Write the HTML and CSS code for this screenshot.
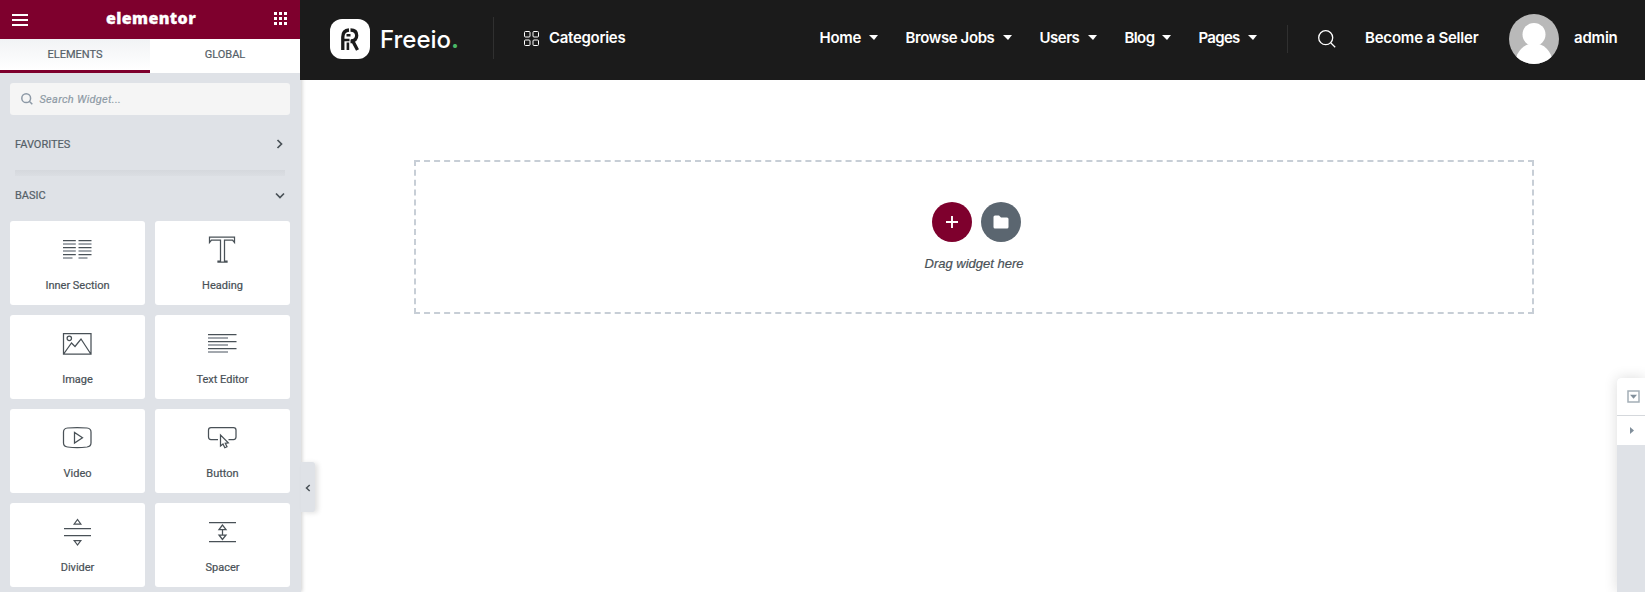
FILE: index.html
```html
<!DOCTYPE html>
<html lang="en">
<head>
<meta charset="utf-8">
<title>Elementor</title>
<link rel="stylesheet" href="styles.css">
</head>
<body>
<div class="app">
  <aside class="panel">
    <header class="panel-head">
      <svg class="burger" width="16" height="12" viewBox="0 0 16 12"><path d="M0 1h16M0 6h16M0 11h16" stroke="#fff" stroke-width="2"/></svg>
      <span class="brand">elementor</span>
      <svg width="13" height="13" viewBox="0 0 13 13" fill="#fff"><path d="M0 0h3v3H0zM5 0h3v3H5zM10 0h3v3h-3zM0 5h3v3H0zM5 5h3v3H5zM10 5h3v3h-3zM0 10h3v3H0zM5 10h3v3H5zM10 10h3v3h-3z"/></svg>
    </header>
    <nav class="tabs"><span class="tab active">ELEMENTS</span><span class="tab">GLOBAL</span></nav>
    <div class="search">
      <svg width="12" height="12" viewBox="0 0 12 12" fill="none" stroke="#8d99a6" stroke-width="1.5"><circle cx="5.2" cy="5.2" r="4.4"/><path d="M8.3 8.3l3 3"/></svg>
      <span>Search Widget...</span>
    </div>
    <div class="cat favorites"><span>FAVORITES</span><svg width="10" height="10" viewBox="0 0 10 10" fill="none" stroke="#495157" stroke-width="1.7"><path d="M2.500 1l4 4-4 4"/></svg></div>
    <div class="rule"></div>
    <div class="cat basic"><span>BASIC</span><svg width="10" height="10" viewBox="0 0 10 10" fill="none" stroke="#495157" stroke-width="1.7"><path d="M1 2.500l4 4 4-4"/></svg></div>
    <div class="grid">
      <div class="card"><svg class="ico" viewBox="0 0 30 30"><path d="M1 5.500h12.800M16.500 5.500h13M1 12.500h12.800M16.500 12.500h13M1 19.500h12.800M16.500 19.500h13"/><path class="soft" d="M1 9h12.800M16.500 9h13M1 16h12.800M16.500 16h13M1 23h9.500M16.500 23H25.500"/></svg><span>Inner Section</span></div>
      <div class="card"><svg class="ico" viewBox="0 0 30 30"><path d="M2.500 2h25v5.500l-2-2.500h-8v21h2.500v1h-9v-1h2.500V5h-9l-2 2.500z"/></svg><span>Heading</span></div>
      <div class="card"><svg class="ico" viewBox="0 0 30 30"><path d="M1.500 4.500h27.500v20.500h-27.500zM2 24.500L9.500 14l3.500 3.500 6-7.500 9.500 14.500"/><circle cx="7.300" cy="9.300" r="2.200"/></svg><span>Image</span></div>
      <div class="card"><svg class="ico" viewBox="0 0 30 30"><path d="M1 5.500h28.500M1 12.500h28.500M1 19.500h28.500"/><path class="soft" d="M1 9h20M1 16h20M1 23h20"/></svg><span>Text Editor</span></div>
      <div class="card"><svg class="ico" viewBox="0 0 30 30"><path d="M5.500 5Q15 4 25 5q4 .5 4 4v11q0 3.500-4 4Q15 25 5.500 24q-4-.5-4-4V9q0-3.500 4-4zM12.500 9.500v10.500l8-5.300z"/></svg><span>Video</span></div>
      <div class="card"><svg class="ico" viewBox="0 0 30 30"><path d="M11 16.500H4q-2.500 0-2.500-2.500V7q0-2.500 2.500-2.500h22.500q2.500 0 2.500 2.500v7q0 2.500-2.500 2.500h-5M13.500 12v11l2.500-2 1.800 3.700 2.200-1-1.700-3.400 3-.5z"/></svg><span>Button</span></div>
      <div class="card"><svg class="ico" viewBox="0 0 30 30"><path d="M2 11.500h27M2 18.500h27M15.500 2.500l-3.300 4.500h6.600zM15.500 28l-3.300-4.500h6.600z"/></svg><span>Divider</span></div>
      <div class="card"><svg class="ico" viewBox="0 0 30 30"><path d="M2 5.500h27M2 24.500h27M15.500 8L12 12.500h7zM15.500 22.500L12 18h7zM15.500 12.500V18"/></svg><span>Spacer</span></div>
    </div>
    <div class="collapse"><svg width="6" height="8" viewBox="0 0 6 8" fill="none" stroke="#495157" stroke-width="1.500"><path d="M4.700 1L1.500 4l3.200 3"/></svg></div>
  </aside>
  <main class="preview">
    <header class="site-head">
      <svg class="logo" width="40" height="40" viewBox="0 0 40 40"><rect width="40" height="40" rx="12" fill="#fff"/><g fill="none" stroke="#1b1b1b"><path stroke-width="3.300" d="M12.800 31V18q0-6.500 6.200-7M20.500 11q6.200 0 6.200 5.500 0 5-5.700 5.500M20.500 22.500h2.500l4.500 8.500"/><path stroke-width="2.600" d="M17.900 31v-7.500M14 21h5.500M16.500 16.300h4"/></g></svg>
      <span class="name">Freeio<b>.</b></span>
      <i class="sep tall"></i>
      <svg class="cats" width="15" height="15" viewBox="0 0 15 15" fill="none" stroke="#fff"><rect x=".5" y=".5" width="5.500" height="5.500" rx="1"/><rect x="9" y=".5" width="5.500" height="5.500" rx="1"/><rect x=".5" y="9" width="5.500" height="5.500" rx="1"/><rect x="9" y="9" width="5.500" height="5.500" rx="1"/></svg>
      <span class="link categories">Categories</span>
      <nav class="menu">
        <span class="link drop home">Home</span><span class="link drop jobs">Browse Jobs</span><span class="link drop users">Users</span><span class="link drop blog">Blog</span><span class="link drop pages">Pages</span>
      </nav>
      <i class="sep short"></i>
      <svg class="find" width="18" height="18" viewBox="0 0 18 18" fill="none" stroke="#fff" stroke-width="1.300"><circle cx="7.700" cy="7.700" r="7"/><path d="M12.700 12.700l4.500 4.500"/></svg>
      <span class="link seller">Become a Seller</span>
      <svg class="avatar" width="50" height="50" viewBox="0 0 50 50"><clipPath id="c"><circle cx="25" cy="25" r="25"/></clipPath><g clip-path="url(#c)"><path fill="#b9b9b9" d="M0 0h50v50H0z"/><circle cx="25" cy="20.500" r="11.500" fill="#fff"/><ellipse cx="25" cy="47" rx="18" ry="17.500" fill="#fff"/></g></svg>
      <span class="link admin">admin</span>
    </header>
    <section class="dropzone">
      <div class="actions">
        <span class="round add"><svg width="12" height="12" viewBox="0 0 12 12"><path d="M6 0v12M0 6h12" stroke="#fff" stroke-width="1.900"/></svg></span>
        <span class="round folder"><svg width="16" height="14" viewBox="0 0 16 14"><path fill="#fff" d="M2 .5h4l2 2h6q1.500 0 1.500 1.500v8q0 1.500-1.500 1.500H2Q.5 13.500.5 12V2Q.5.5 2 .5z"/></svg></span>
      </div>
      <p class="hint">Drag widget here</p>
    </section>
    <aside class="navigator">
      <div class="nav-head"><svg width="13" height="13" viewBox="0 0 13 13"><path fill="none" stroke="#a4afb7" stroke-width="1.500" d="M1 1h11v11H1z"/><path fill="#818f9b" d="M3 4.700h7L6.500 8.700z"/></svg></div>
      <div class="nav-row"><svg width="4" height="7" viewBox="0 0 4 7"><path fill="#818f9b" d="M0 0l4 3.500L0 7z"/></svg></div>
    </aside>
  </main>
</div>
</body>
</html>
```
FILE: styles.css
```css
* { box-sizing: border-box; }
body { margin: 0; background: #fff; font-family: Roboto, sans-serif; }
.app { display: flex; width: 1645px; height: 592px; overflow: hidden; }
svg { display: block; flex: none; }

.panel { position: relative; z-index: 2; width: 301px; flex: none; background: #dfe2e7; box-shadow: 1px 0 4px rgba(0,0,0,.2); color: #556068; font-size: 11px; font-weight: 500; }
.panel-head { width: 300px; height: 39px; padding: 0 13px 2px 12px; background: #7e002d; display: flex; align-items: center; justify-content: space-between; }
.burger { margin-top: 2px; }
.brand { color: #fff; font: 800 16px/1 "Open Sans", sans-serif; letter-spacing: .4px; margin-top: -2px; -webkit-text-stroke: .3px; }
.tabs { display: flex; width: 300px; height: 34px; background: #fff; }
.tab { width: 150px; line-height: 31px; text-align: center; font-weight: 400; -webkit-text-stroke: .2px; }
.tab.active { background: linear-gradient(#f1f3f5, #fff); border-bottom: 3px solid #7e002d; }
.search { margin: 10px 11px 0 10px; height: 32px; padding-left: 11px; display: flex; align-items: center; gap: 6.5px; border-radius: 3px; background: #f5f5f5; font-style: italic; font-weight: 400; letter-spacing: .28px; color: #8f9ba6; -webkit-text-stroke: .2px; }
.cat { display: flex; align-items: center; justify-content: space-between; padding: 0 16px 0 15px; font-weight: 400; -webkit-text-stroke: .2px; }
.favorites { height: 55px; padding-top: 3px; }
.rule { height: 6px; margin: 0 16px 0 15px; background: linear-gradient(#d5d8dd, #dbdee3); }
.basic { height: 45px; padding-bottom: 6px; }
.grid { display: grid; grid-template-columns: 135px 135px; grid-auto-rows: 84px; gap: 10px; padding-left: 10px; }
.card { display: flex; flex-direction: column; align-items: center; padding-top: 14px; background: #fff; border-radius: 3px; color: #495157; }
.card span { margin-top: 14px; line-height: 14px; font-weight: 400; -webkit-text-stroke: .2px; }
.ico { width: 30px; height: 30px; margin-right: 1px; fill: none; stroke: #495157; stroke-width: 1.250; }
.soft { stroke: #858c94; stroke-width: 1.700; }
.collapse { position: absolute; left: 301px; top: 462px; width: 14px; height: 50px; display: flex; align-items: center; justify-content: center; padding-right: 1px; padding-top: 1px; background: #dfe2e7; border-radius: 0 3px 3px 0; box-shadow: 3px 1px 5px rgba(0,0,0,.12); }

.preview { position: relative; flex: 1; margin-left: -1px; }
.site-head { position: relative; z-index: 3; height: 80px; background: #1b1b1b; color: #fff; display: flex; align-items: center; font-family: Inter, sans-serif; padding-bottom: 2px; }
.logo { margin-left: 30px; }
.name { width: 113px; margin-left: 10px; font-size: 24px; font-weight: 500; white-space: nowrap; }
.name b { color: #4ab866; }
.sep { width: 1px; background: #303030; }
.tall { height: 42px; margin-top: -2px; }
.cats { margin: -2px 0 0 30px; }
.categories { margin-left: 10px; width: 77px; letter-spacing: -.3px; }
.link { font-size: 15px; font-weight: 600; line-height: 20px; margin-top: -2px; white-space: nowrap; }
.menu { display: flex; gap: 28px; margin-left: 193.5px; }
.drop { display: flex; align-items: center; justify-content: space-between; letter-spacing: -.3px; }
.drop::after { content: ""; border: 4.5px solid transparent; border-top-width: 5px; border-top-color: #fff; border-bottom: 0; border-left-width: 5px; margin-top: -2px; }
.home { width: 58px; }
.jobs { width: 106px; letter-spacing: -.4px; }
.users { width: 57px; letter-spacing: -.5px; }
.blog { width: 46px; letter-spacing: -.6px; }
.pages { width: 58px; letter-spacing: -.7px; }
.short { height: 28px; margin-left: 30.5px; }
.find { margin-left: 30px; }
.seller { width: 114px; margin-left: 29px; letter-spacing: -.2px; }
.avatar { margin-left: 30px; }
.admin { margin-left: 15px; letter-spacing: -.2px; }

.dropzone { width: 1120px; height: 154px; margin: 80px 0 0 114px; padding-top: 40px; border: 2px dashed #c7ced6; text-align: center; }
.actions { display: flex; gap: 9px; justify-content: center; padding-left: 5px; }
.round { width: 40px; height: 40px; border-radius: 50%; display: flex; align-items: center; justify-content: center; }
.add { background: #7e002d; }
.folder { background: #5b6670; }
.hint { margin: 13px 0 0; font: italic 13px/18px "Liberation Sans", sans-serif; color: #495157; -webkit-text-stroke: .2px; }

.navigator { position: absolute; left: 1317px; top: 378px; width: 28px; height: 214px; background: #dfe2e7; border-radius: 4px 0 0 0; box-shadow: 0 0 14px rgba(0,0,0,.14); }
.nav-head { height: 38px; padding: 12px 0 0 10px; background: #fff; border-bottom: 1px solid #d5d8dc; border-radius: 4px 0 0 0; }
.nav-row { height: 29px; padding: 11px 0 0 13px; background: #fff; }
```
